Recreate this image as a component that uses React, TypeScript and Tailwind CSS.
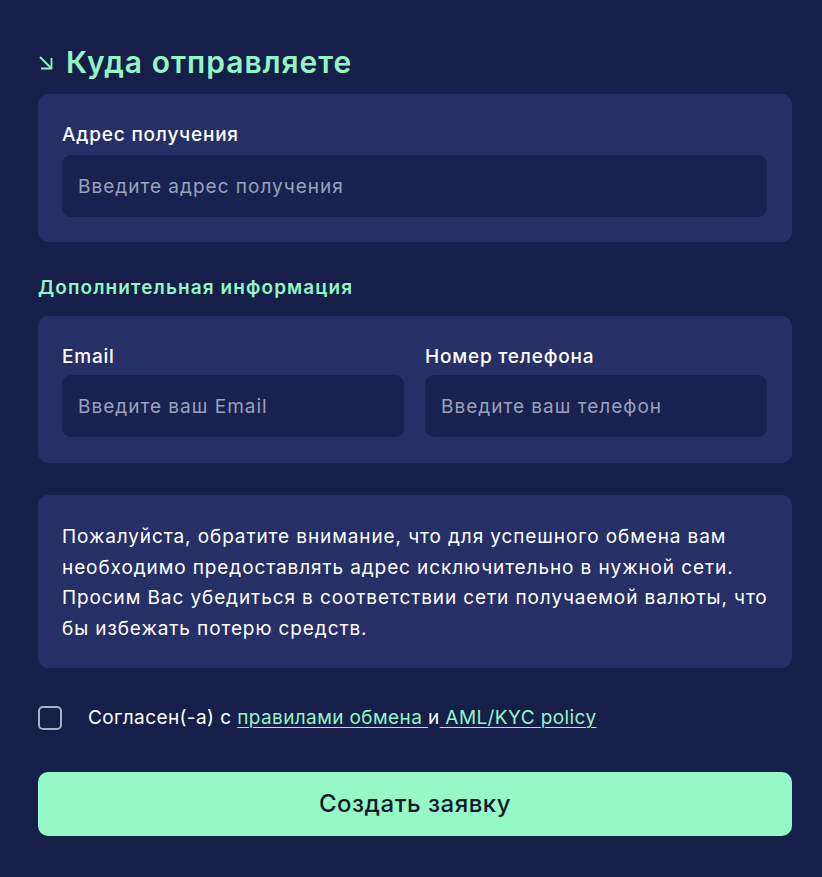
import React from "react";

const Field = ({ label, placeholder, gap }: { label: string; placeholder: string; gap: string }) => (
  <div className="flex flex-col flex-1">
    <label className={`text-[19px] font-medium text-white leading-[26px] tracking-[0.8px] ${gap}`}>{label}</label>
    <input
      placeholder={placeholder}
      className="h-[62px] w-full rounded-[9px] bg-[#18214f] px-4 text-[19px] text-white placeholder:text-[#9aa1bd] outline-none tracking-[1px]"
    />
  </div>
);

export default function App() {
  return (
    <div
      className="min-h-[877px] bg-[#161f4a] pl-[38px] pr-[30px] pt-[42px] pb-10"
      style={{ fontFamily: "Inter, 'Noto Sans', sans-serif" }}
    >
      {/* Heading */}
      <h1 className="flex items-center text-[30px] font-semibold text-[#93f5c5] leading-[40px] tracking-[1px] mb-[12px]">
        <svg width="16" height="16" viewBox="0 0 16 16" fill="none" stroke="#93f5c5" strokeWidth="1.8" className="mr-[12px] mt-[2px]">
          <path d="M2 2 L13 13" />
          <path d="M3 13.5 H13.5 V3" />
        </svg>
        Куда отправляете
      </h1>

      {/* Receiving address */}
      <div className="rounded-[10px] bg-[#263066] pl-6 pr-[25px] pt-[28px] pb-[25px]">
        <Field label="Адрес получения" placeholder="Введите адрес получения" gap="mb-[7px]" />
      </div>

      <h2 className="mt-[33px] mb-[15px] text-[19px] font-semibold text-[#93f5c5] leading-[26px] tracking-[1.1px]">
        Дополнительная информация
      </h2>

      <div className="rounded-[10px] bg-[#263066] pl-6 pr-[25px] pt-[28px] pb-[26px] flex gap-[21px]">
        <Field label="Email" placeholder="Введите ваш Email" gap="mb-[5px]" />
        <Field label="Номер телефона" placeholder="Введите ваш телефон" gap="mb-[5px]" />
      </div>

      {/* Notice */}
      <div className="mt-[32px] rounded-[10px] bg-[#263066] px-6 pt-[27px] pb-[24px]">
        <p className="text-[19px] leading-[30.5px] text-white tracking-[0.9px] whitespace-nowrap">
          Пожалуйста, обратите внимание, что для успешного обмена вам
          <br />
          необходимо предоставлять адрес исключительно в нужной сети.
          <br />
          Просим Вас убедиться в соответствии сети получаемой валюты, что
          <br />
          бы избежать потерю средств.
        </p>
      </div>

      {/* Agreement */}
      <div className="mt-[38px] flex items-center gap-[26px]">
        <span className="w-[24px] h-[24px] rounded-[5px] border-2 border-[#a9aec9] shrink-0" />
        <span className="text-[19px] leading-[24px] text-white tracking-[0.4px]">
          Согласен(-а) с{" "}
          <a href="#" className="text-[#93f5c5] underline underline-offset-[3px] decoration-1">правилами обмена </a>
          и
          <a href="#" className="text-[#93f5c5] underline underline-offset-[3px] decoration-1"> AML/KYC policy</a>
        </span>
      </div>

      <button className="mt-[42px] w-full h-[64px] rounded-[10px] bg-[#94f9c7] text-[24px] font-medium text-[#141a2e] tracking-[0.5px]">
        Создать заявку
      </button>
    </div>
  );
}
